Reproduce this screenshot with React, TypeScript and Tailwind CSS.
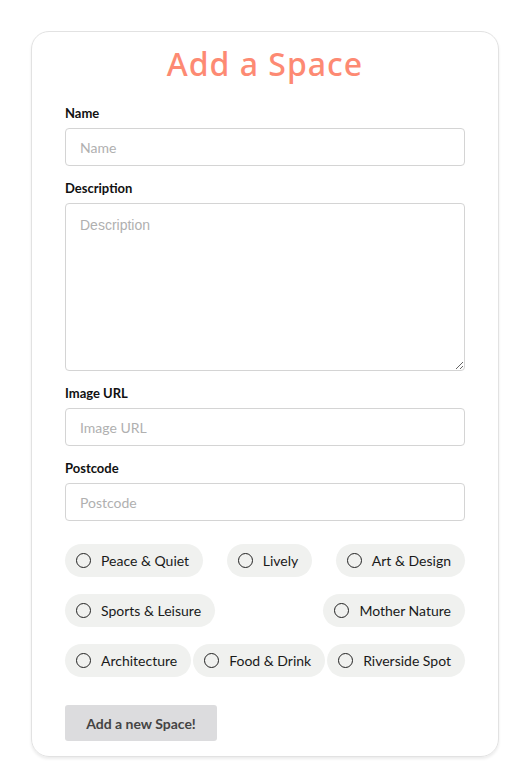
import { useState } from "react"

const rows = [
  ["Peace & Quiet", "Lively", "Art & Design"],
  ["Sports & Leisure", "Mother Nature"],
  ["Architecture", "Food & Drink", "Riverside Spot"],
]

function Field({ label, placeholder }: { label: string; placeholder: string }) {
  return (
    <div className="flex flex-col">
      <label className="text-[13px] font-bold text-[#111] leading-none mb-[8px]">{label}</label>
      <input
        placeholder={placeholder}
        className="h-[38px] w-full rounded-[4px] border border-[#d4d4d4] px-[14px] text-[14px] text-[#333] placeholder:text-[#b0b0b0] outline-none"
      />
    </div>
  )
}

function Chip({ name }: { name: string }) {
  const [on, setOn] = useState(false)
  return (
    <button
      type="button"
      onClick={() => setOn(!on)}
      className="flex h-[33px] items-center gap-[10px] rounded-full bg-[#f0f1ef] pl-[11px] pr-[14px] text-[14px] text-[#1a1a1a]"
    >
      <span className="flex h-[15px] w-[15px] items-center justify-center rounded-full border-[1.5px] border-[#222]">
        {on && <span className="h-[7px] w-[7px] rounded-full bg-[#222]" />}
      </span>
      {name}
    </button>
  )
}

export default function App() {
  return (
    <div className="min-h-[781px] bg-white pt-[31px] font-['Lato','Noto_Sans',sans-serif]">
      <div className="mx-[31px] w-[468px] rounded-[18px] border border-[#e2e2e2] px-[33px] pb-[15px] shadow-[0_2px_3px_rgba(0,0,0,0.08)]">
        <h1 className="mt-[12px] text-center text-[32px] leading-[40px] tracking-[1px] font-medium text-[#fd8a73] font-['Noto_Sans',sans-serif]">
          Add a Space
        </h1>

        <form className="mt-[23px] flex flex-col gap-[16px]" onSubmit={(e) => e.preventDefault()}>
          <Field label="Name" placeholder="Name" />
          <div className="flex flex-col">
            <label className="text-[13px] font-bold text-[#111] leading-none mb-[8px]">Description</label>
            <textarea
              placeholder="Description"
              className="h-[168px] w-full rounded-[4px] border border-[#d4d4d4] px-[14px] py-[11px] text-[14px] text-[#333] placeholder:text-[#b0b0b0] outline-none font-['Liberation_Sans',sans-serif]"
            />
          </div>
          <Field label="Image URL" placeholder="Image URL" />
          <Field label="Postcode" placeholder="Postcode" />

          <div className="mt-[7px] flex flex-col gap-[17px]">
            {rows.map((row, i) => (
              <div key={i} className="flex justify-between">
                {row.map((n) => (
                  <Chip key={n} name={n} />
                ))}
              </div>
            ))}
          </div>

          <div className="mt-[12px]">
            <button
              type="submit"
              className="h-[36px] w-[152px] rounded-[3px] bg-[#dcdcde] text-[14px] font-bold text-[#444]"
            >
              Add a new Space!
            </button>
          </div>
        </form>
      </div>
    </div>
  )
}
